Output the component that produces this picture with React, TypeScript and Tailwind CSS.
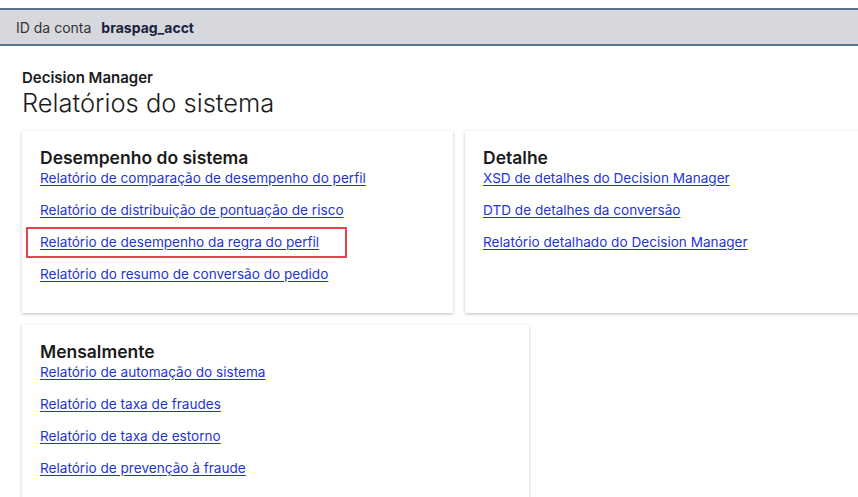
const perf = [
  "Relatório de comparação de desempenho do perfil",
  "Relatório de distribuição de pontuação de risco",
  "Relatório de desempenho da regra do perfil",
  "Relatório do resumo de conversão do pedido",
];

const detail = [
  "XSD de detalhes do Decision Manager",
  "DTD de detalhes da conversão",
  "Relatório detalhado do Decision Manager",
];

const monthly = [
  "Relatório de automação do sistema",
  "Relatório de taxa de fraudes",
  "Relatório de taxa de estorno",
  "Relatório de prevenção à fraude",
];

const Card = ({
  title,
  links,
  highlight,
  className,
}: {
  title: string;
  links: string[];
  highlight?: number;
  className: string;
}) => (
  <div className={`shrink-0 bg-white px-[18px] pt-[16px] shadow-[0_1px_3px_rgba(0,0,0,0.25)] ${className}`}>
    <h2 className="text-[17.5px] font-semibold leading-[22px] text-[#1b1b1b]">{title}</h2>
    <ul className="flex flex-col gap-[14px]">
      {links.map((l, i) => (
        <li key={l} className="relative text-[13.6px] leading-[18px]">
          <a href="#" className="text-[#1f35d2] underline underline-offset-2">
            {l}
          </a>
          {highlight === i && (
            <span className="absolute -left-[14px] -top-[6px] h-[31px] w-[321px] border-2 border-[#e2464c]" />
          )}
        </li>
      ))}
    </ul>
  </div>
);

export default function App() {
  return (
    <div className="h-[497px] w-[858px] overflow-hidden bg-white font-['Inter',sans-serif]">
      <div className="mt-2 flex h-[38px] items-center gap-[10px] border-y-2 border-[#5b7089] bg-[#d6d8dd] px-4 text-[14px]">
        <span className="text-[#333]">ID da conta</span>
        <span className="font-bold text-[#1c2340]">braspag_acct</span>
      </div>

      <div className="px-[22px] pt-[23px]">
        <div className="text-[15px] font-semibold leading-[18px] text-[#1b1b1b]">Decision Manager</div>
        <h1 className="text-[25.5px] font-light leading-[31px] text-[#1b1b1b]">Relatórios do sistema</h1>

        <div className="mt-[13px] flex gap-3">
          <Card title="Desempenho do sistema" links={perf} highlight={2} className="h-[182px] w-[431px]" />
          <Card title="Detalhe" links={detail} className="h-[182px] w-[420px]" />
        </div>
        <div className="mt-3">
          <Card title="Mensalmente" links={monthly} className="h-[200px] w-[507px]" />
        </div>
      </div>
    </div>
  );
}
